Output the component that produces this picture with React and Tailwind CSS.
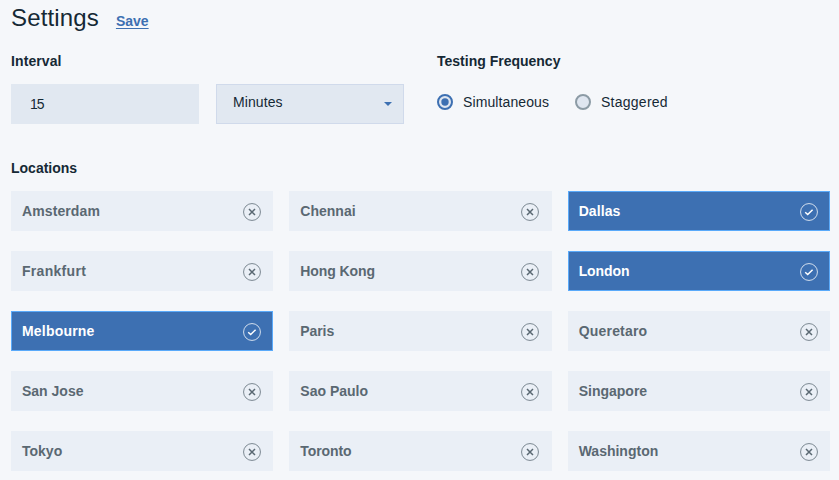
const LOCATIONS = [
  { name: "Amsterdam", spacing: "tracking-[0.1px]" },
  { name: "Chennai", spacing: "tracking-normal" },
  { name: "Dallas", spacing: "tracking-[0.1px]" },
  { name: "Frankfurt", spacing: "tracking-[0.3px]" },
  { name: "Hong Kong", spacing: "tracking-[-0.1px]" },
  { name: "London", spacing: "tracking-[-0.1px]" },
  { name: "Melbourne", spacing: "tracking-[0.2px]" },
  { name: "Paris", spacing: "tracking-[-0.1px]" },
  { name: "Queretaro", spacing: "tracking-[0.2px]" },
  { name: "San Jose", spacing: "tracking-normal" },
  { name: "Sao Paulo", spacing: "tracking-normal" },
  { name: "Singapore", spacing: "tracking-normal" },
  { name: "Tokyo", spacing: "tracking-normal" },
  { name: "Toronto", spacing: "tracking-[-0.1px]" },
  { name: "Washington", spacing: "tracking-normal" },
];
const SELECTED = ["Dallas", "London", "Melbourne"];

function StatusIcon({ checked }) {
  return (
    <svg className="mt-px size-[18px] shrink-0" viewBox="0 0 18 18" fill="none">
      <circle cx="9" cy="9" r="8.45" stroke="currentColor" strokeWidth="0.9" opacity="0.85" />
      {checked ? (
        <path d="M5.2 9.2 7.7 11.5 12.6 6.7" stroke="currentColor" strokeWidth="1.5" />
      ) : (
        <path d="M6 6 12 12M12 6 6 12" stroke="currentColor" strokeWidth="1.5" />
      )}
    </svg>
  );
}

function Location({ name, spacing }) {
  const checked = SELECTED.includes(name);
  return (
    <button
      type="button"
      className={
        "flex h-10 items-center justify-between border pl-[10px] pr-[11.2px] text-left font-bold " +
        (checked
          ? "border-[#5aaafa] bg-[#3d70b2] text-white"
          : "border-[#eaeff6] bg-[#eaeff6] text-[#5a6872]")
      }
    >
      <span className={spacing}>{name}</span>
      <StatusIcon checked={checked} />
    </button>
  );
}

function Radio({ label, checked, spacing }) {
  return (
    <label className="flex items-center gap-[10px]">
      <svg className="size-4" viewBox="0 0 16 16">
        <circle
          cx="8"
          cy="8"
          r="7"
          fill="#dfe6f0"
          stroke={checked ? "#3d70b2" : "#8c9ba5"}
          strokeWidth="2"
        />
        {checked && <circle cx="8" cy="8" r="3.7" fill="#3d70b2" />}
      </svg>
      <span className={spacing}>{label}</span>
    </label>
  );
}

export default function App() {
  return (
    <main className="h-[480px] w-[839px] overflow-hidden bg-[#f5f7fa] pl-[11px] pr-[9px] font-['Liberation_Sans',Arial,sans-serif] text-[14px] leading-5 tracking-[0.1px] text-[#152935]">
      <header className="flex h-9 items-baseline gap-[17px]">
        <h1 className="text-[24px] leading-9 tracking-[0.15px]">Settings</h1>
        <a href="#" className="font-bold tracking-normal text-[#3d70b2] underline underline-offset-2">Save</a>
      </header>

      <div className="mt-[15px] flex">
        <section className="w-[426px]">
          <h2 className="font-bold">Interval</h2>
          <div className="mt-[13px] flex gap-[17px]">
            <div className="flex h-10 w-[188px] items-center bg-[#e1e8f1] pl-[19px] tracking-[-1px]">15</div>
            <div className="flex h-10 w-[188px] items-center justify-between border border-[#d0daeb] bg-[#e1e8f1] pb-1 pl-4 pr-[11px]">
              <span>Minutes</span>
              <svg className="mt-1 h-1 w-2" viewBox="0 0 8 4">
                <path d="M0 0h8L4 4z" fill="#3d70b2" />
              </svg>
            </div>
          </div>
        </section>
        <section>
          <h2 className="font-bold tracking-normal">Testing Frequency</h2>
          <div className="mt-[21px] flex gap-[26px]">
            <Radio label="Simultaneous" spacing="tracking-[0.1px]" checked />
            <Radio label="Staggered" spacing="tracking-[0.25px]" />
          </div>
        </section>
      </div>

      <section className="mt-[34px]">
        <h2 className="font-bold tracking-normal">Locations</h2>
        <div className="mt-[13px] grid grid-cols-3 gap-x-4 gap-y-5">
          {LOCATIONS.map(({ name, spacing }) => (
            <Location key={name} name={name} spacing={spacing} />
          ))}
        </div>
      </section>
    </main>
  );
}
